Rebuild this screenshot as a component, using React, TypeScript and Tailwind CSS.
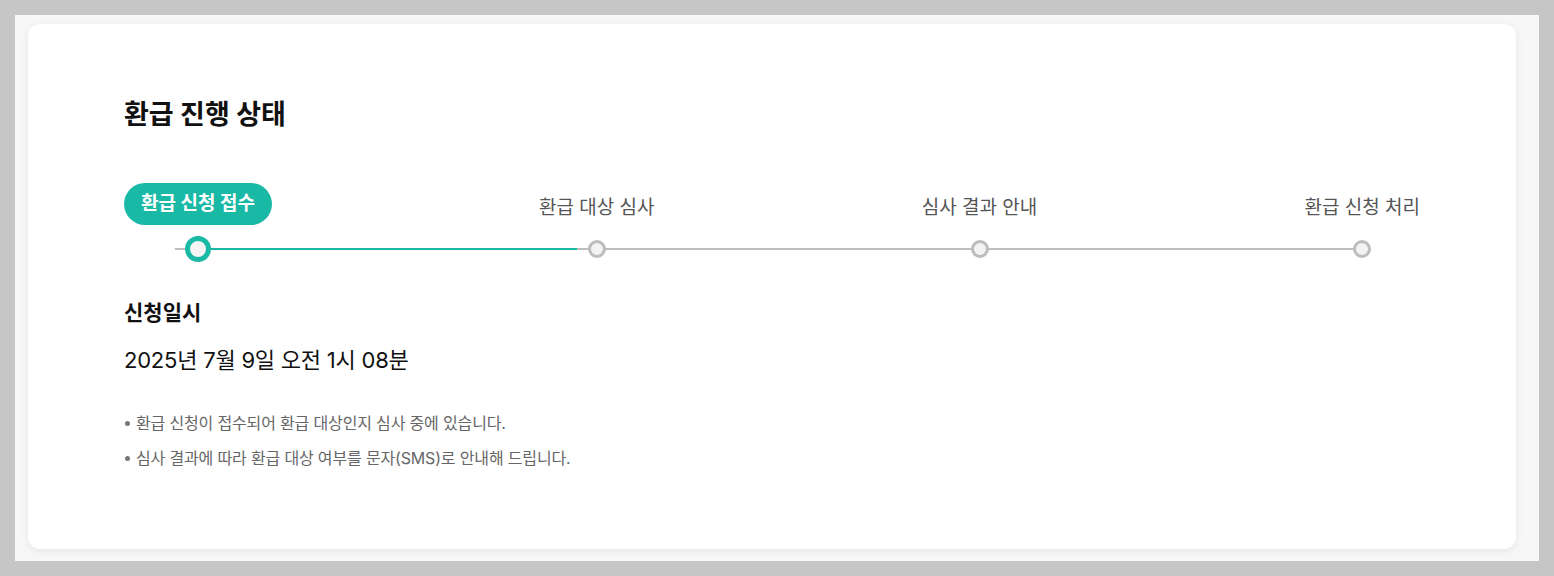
import React from "react";

const steps = [
    { label: "환급 신청 접수", active: true },
    { label: "환급 대상 심사", active: false },
    { label: "심사 결과 안내", active: false },
    { label: "환급 신청 처리", active: false },
];

const notes = [
    "환급 신청이 접수되어 환급 대상인지 심사 중에 있습니다.",
    "심사 결과에 따라 환급 대상 여부를 문자(SMS)로 안내해 드립니다.",
];

export default function App() {
    return (
        <div
            className="h-screen flex flex-col bg-[#c6c6c6] p-[15px]"
            style={{ fontFamily: "Inter, 'Noto Sans CJK KR', sans-serif" }}
        >
            <div className="flex-1 flex flex-col bg-[#f7f7f7] pl-[13px] pt-[9px] pr-[23px] pb-[12px]">
                <section className="flex-1 bg-white rounded-[12px] shadow-[0_2px_8px_rgba(0,0,0,0.07)] px-[96px] pt-[74px]">
                    <h2 className="text-[27px] leading-[34px] font-bold text-[#111]">환급 진행 상태</h2>

                    <div className="relative mt-[51px] flex justify-between items-start">
                        <div className="absolute left-[51px] right-[57px] top-[65px] h-[2px] bg-[#bdbdbd]" />
                        <div className="absolute left-[75px] w-[378px] top-[65px] h-[2px] bg-[#19b9a6]" />

                        {steps.map((step) => (
                            <div key={step.label} className="relative flex flex-col items-center">
                                <div className="h-[42px] flex items-center">
                                    {step.active ? (
                                        <span className="h-[42px] px-[17px] rounded-full bg-[#19b9a6] text-white text-[19px] font-bold flex items-center">
                                            {step.label}
                                        </span>
                                    ) : (
                                        <span className="mt-[8px] text-[19px] text-[#555]">{step.label}</span>
                                    )}
                                </div>
                                <div className="mt-[11px] h-[26px] flex items-center justify-center">
                                    {step.active ? (
                                        <span className="w-[26px] h-[26px] rounded-full border-[5px] border-[#19b9a6] bg-[#f5f5f5]" />
                                    ) : (
                                        <span className="w-[18px] h-[18px] rounded-full border-[3px] border-[#bdbdbd] bg-[#f3f3f3]" />
                                    )}
                                </div>
                            </div>
                        ))}
                    </div>

                    <h3 className="mt-[37px] text-[21px] leading-[28px] font-bold text-[#111]">신청일시</h3>
                    <p className="mt-[18px] text-[22px] leading-[30px] text-[#111] tracking-[-0.01em]">
                        2025년 7월 9일 오전 1시 08분
                    </p>

                    <ul className="mt-[36px] flex flex-col gap-[11px]">
                        {notes.map((note) => (
                            <li key={note} className="flex items-center text-[16px] leading-[24px] text-[#666] tracking-[-0.01em]">
                                <span className="w-[5px] h-[5px] rounded-full bg-[#777] ml-[1px] mr-[6px]" />
                                {note}
                            </li>
                        ))}
                    </ul>
                </section>
            </div>
        </div>
    );
}
